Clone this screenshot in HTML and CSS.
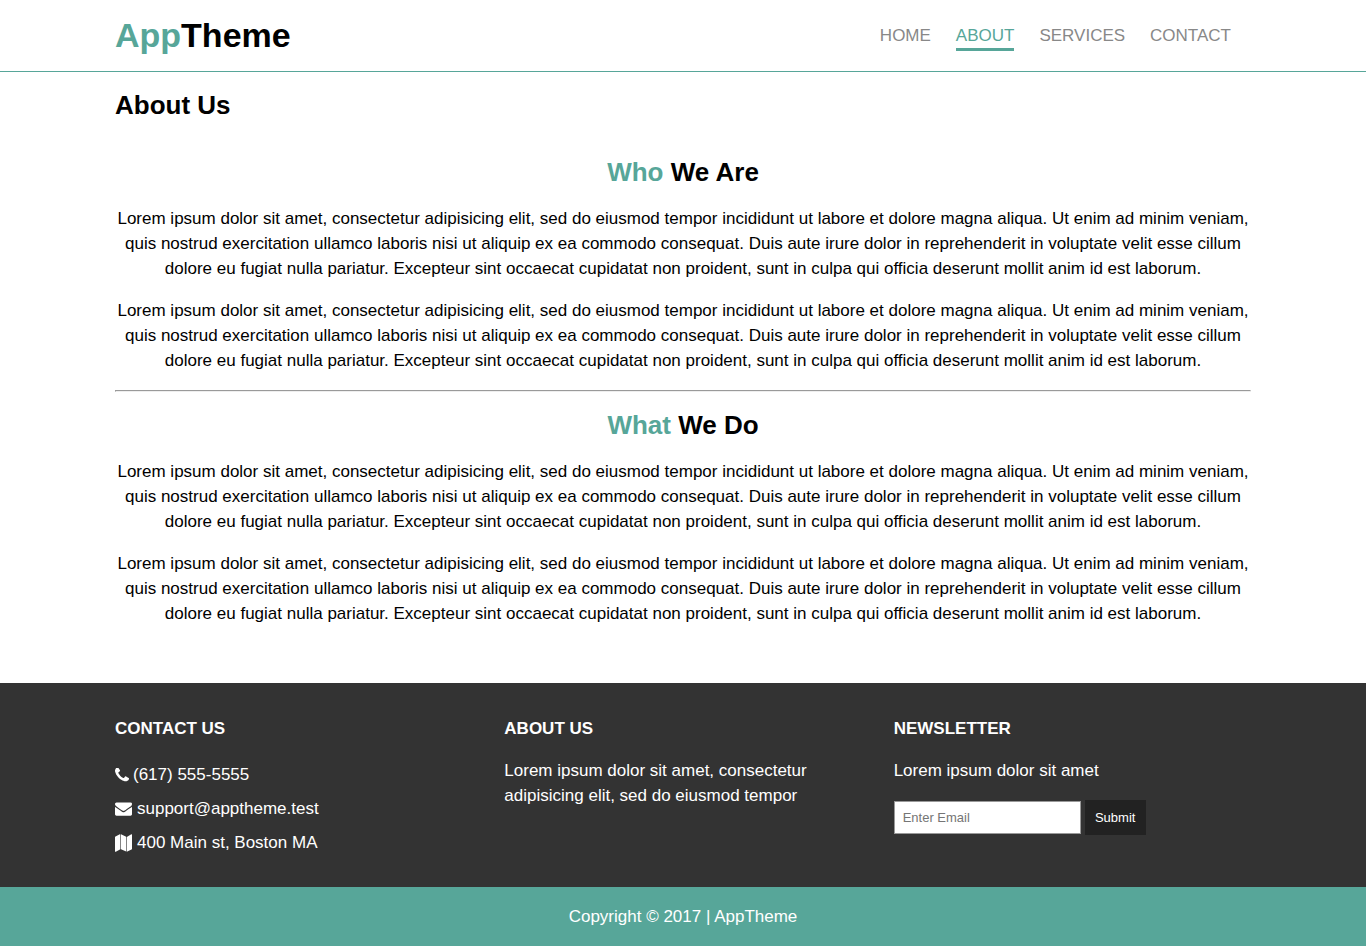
FILE: index.html
```html
<!DOCTYPE html>
<html lang="en">
<head>
<meta charset="utf-8">
<meta name="viewport" content="width=device-width, initial-scale=1">
<title>AppTheme | About</title>
<link rel="stylesheet" href="styles.css">
</head>
<body>
<header class="site-header">
  <div class="container header-row">
    <h1 class="logo"><span class="accent">App</span>Theme</h1>
    <nav class="main-nav">
      <a href="#">HOME</a>
      <a href="#" class="current">ABOUT</a>
      <a href="#">SERVICES</a>
      <a href="#">CONTACT</a>
    </nav>
  </div>
</header>
<main class="container content">
  <h2 class="heading page-title">About Us</h2>
  <section class="block">
    <h2 class="heading"><span class="accent">Who</span> We Are</h2>
    <p>Lorem ipsum dolor sit amet, consectetur adipisicing elit, sed do eiusmod tempor incididunt ut labore et dolore magna aliqua. Ut enim ad minim veniam, quis nostrud exercitation ullamco laboris nisi ut aliquip ex ea commodo consequat. Duis aute irure dolor in reprehenderit in voluptate velit esse cillum dolore eu fugiat nulla pariatur. Excepteur sint occaecat cupidatat non proident, sunt in culpa qui officia deserunt mollit anim id est laborum.</p>
    <p>Lorem ipsum dolor sit amet, consectetur adipisicing elit, sed do eiusmod tempor incididunt ut labore et dolore magna aliqua. Ut enim ad minim veniam, quis nostrud exercitation ullamco laboris nisi ut aliquip ex ea commodo consequat. Duis aute irure dolor in reprehenderit in voluptate velit esse cillum dolore eu fugiat nulla pariatur. Excepteur sint occaecat cupidatat non proident, sunt in culpa qui officia deserunt mollit anim id est laborum.</p>
  </section>
  <hr class="divider">
  <section class="block">
    <h2 class="heading"><span class="accent">What</span> We Do</h2>
    <p>Lorem ipsum dolor sit amet, consectetur adipisicing elit, sed do eiusmod tempor incididunt ut labore et dolore magna aliqua. Ut enim ad minim veniam, quis nostrud exercitation ullamco laboris nisi ut aliquip ex ea commodo consequat. Duis aute irure dolor in reprehenderit in voluptate velit esse cillum dolore eu fugiat nulla pariatur. Excepteur sint occaecat cupidatat non proident, sunt in culpa qui officia deserunt mollit anim id est laborum.</p>
    <p>Lorem ipsum dolor sit amet, consectetur adipisicing elit, sed do eiusmod tempor incididunt ut labore et dolore magna aliqua. Ut enim ad minim veniam, quis nostrud exercitation ullamco laboris nisi ut aliquip ex ea commodo consequat. Duis aute irure dolor in reprehenderit in voluptate velit esse cillum dolore eu fugiat nulla pariatur. Excepteur sint occaecat cupidatat non proident, sunt in culpa qui officia deserunt mollit anim id est laborum.</p>
  </section>
</main>
<footer>
  <div class="footer-main">
    <div class="container footer-grid">
      <section>
        <h4>CONTACT US</h4>
        <ul class="contact-list">
          <li><svg class="icon icon-phone" viewBox="0 192 1408 1408" aria-hidden="true"><path d="M1408 1240q0 27-10 70.500t-21 68.500q-21 50-122 106-94 51-186 51-27 0-53-3.500t-57.500-12.500-47-14.500-55.500-20.500-49-18q-98-35-175-83-127-79-264-216t-216-264q-48-77-83-175-3-9-18-49t-20.500-55.500-14.500-47-12.500-57.500-3.500-53q0-92 51-186 56-101 106-122 25-11 68.500-21t70.500-10q14 0 21 3 18 6 53 76 11 19 30 54t35 63.500 31 53.500q3 4 17.500 25t21.500 35.500 7 28.500q0 20-28.500 50t-62 55-62 53-28.500 46q0 9 5 22.500t8.500 20.500 14 24 11.500 19q76 137 174 235t235 174q2 1 19 11.500t24 14 20.500 8.500 22.500 5q18 0 46-28.500t53-62 55-62 50-28.500q14 0 28.500 7t35.500 21.500 25 17.500q25 15 53.500 31t63.500 35 54 30q70 35 76 53 3 7 3 21z"/></svg><span>(617) 555-5555</span></li>
          <li><svg class="icon" viewBox="0 0 1792 1792" aria-hidden="true"><path d="M1792 710v794q0 66-47 113t-113 47h-1472q-66 0-113-47t-47-113v-794q44 49 101 87 362 246 497 345 57 42 92.500 65.500t94.500 48 110 24.500h2q51 0 110-24.500t94.500-48 92.500-65.500q170-123 498-345 57-39 100-87zm0-294q0 79-49 151t-122 123q-376 261-468 325-10 7-42.500 30.500t-54 38-52 32.500-57.500 27-50 9h-2q-23 0-50-9t-57.500-27-52-32.500-54-38-42.500-30.500q-91-64-262-182.500t-205-142.500q-62-42-117-115.500t-55-136.500q0-78 41.500-130t118.500-52h1472q65 0 112.500 47t47.500 113z"/></svg><span>support@apptheme.test</span></li>
          <li><svg class="icon icon-map" viewBox="0 0 17 18" aria-hidden="true"><path d="M5.400 .4V15.200L.8 17.700Q0 18 0 17.200V3.300Q0 2.800 .5 2.500L4.800 .2Q5.200 0 5.400 .4zM6 .3L11.200 2.700V17.600L6 15.200zM11.800 2.900L16.300 .2Q17 0 17 .7V14.700Q17 15.200 16.500 15.500L11.800 17.800z"/></svg><span>400 Main st, Boston MA</span></li>
        </ul>
      </section>
      <section>
        <h4>ABOUT US</h4>
        <p>Lorem ipsum dolor sit amet, consectetur adipisicing elit, sed do eiusmod tempor</p>
      </section>
      <section>
        <h4>NEWSLETTER</h4>
        <p>Lorem ipsum dolor sit amet</p>
        <form class="newsletter">
          <input type="email" placeholder="Enter Email" aria-label="Email">
          <button type="submit">Submit</button>
        </form>
      </section>
    </div>
  </div>
  <div class="copyright">Copyright © 2017 | AppTheme</div>
</footer>
</body>
</html>
```
FILE: styles.css
```css
* {
  box-sizing: border-box;
}

body {
  margin: 0;
  font: 17px/25px "Liberation Sans", Arial, sans-serif;
  color: #000;
  background: #fff;
}

h1, h2, h4, p, ul {
  margin: 0;
}

.container {
  max-width: 1136px;
  margin: 0 auto;
}

.accent {
  color: #57a699;
}

.site-header {
  border-bottom: 1px solid #57a699;
}

.header-row {
  display: flex;
  flex-wrap: wrap;
  align-items: center;
  justify-content: space-between;
  padding: 10px 0;
}

.logo {
  font-size: 34px;
  line-height: 51px;
}

.main-nav {
  display: flex;
  flex-wrap: wrap;
  gap: 25px;
  padding-right: 20px;
}

.main-nav a {
  padding: 3px 0 0;
  border-bottom: 3px solid transparent;
  color: #888;
  text-decoration: none;
}

.main-nav .current {
  color: #57a699;
  border-color: #57a699;
}

.content {
  padding: 14px 0 57px;
}

.heading {
  font-size: 26px;
  line-height: 38px;
}

.page-title {
  margin-bottom: 29px;
}

.block {
  text-align: center;
}

.block .heading {
  margin-bottom: 15px;
}

.block p + p {
  margin-top: 17px;
}

.divider {
  margin: 17px 0 14px;
  border: 1px solid #9a9a9a;
  border-right-color: #eee;
  border-bottom-color: #eee;
}

.footer-main {
  padding: 33px 0 32px;
  color: #fff;
  background: #333;
}

.footer-grid {
  display: grid;
  grid-template-columns: repeat(3, 1fr);
  gap: 32px;
}

.footer-grid h4 {
  font-size: 17px;
  margin-bottom: 17px;
}

.contact-list {
  display: grid;
  gap: 9px;
  padding: 4px 0 0;
  list-style: none;
}

.contact-list li {
  display: flex;
  align-items: center;
  gap: 5px;
}

.icon {
  width: 17px;
  height: 17px;
  fill: #fff;
}

.icon-phone {
  width: 14px;
  height: 14px;
}

.icon-phone + span {
  margin-left: -1px;
}

.icon-map {
  height: 18px;
}

.newsletter {
  display: flex;
  align-items: center;
  gap: 4px;
  margin-top: 17px;
}

.newsletter input {
  width: 187px;
  height: 33px;
  padding: 0 8px;
  border: 1px solid #999;
  background: #fff;
  font: 13px "Liberation Sans", Arial, sans-serif;
}

.newsletter input::placeholder {
  color: #757575;
}

.newsletter button {
  min-width: 61px;
  height: 35px;
  padding: 0 10px;
  border: 0;
  color: #fff;
  background: #222;
  font: 13px "Liberation Sans", Arial, sans-serif;
}

.copyright {
  padding: 17px 0;
  text-align: center;
  color: #fff;
  background: #57a699;
}
```
